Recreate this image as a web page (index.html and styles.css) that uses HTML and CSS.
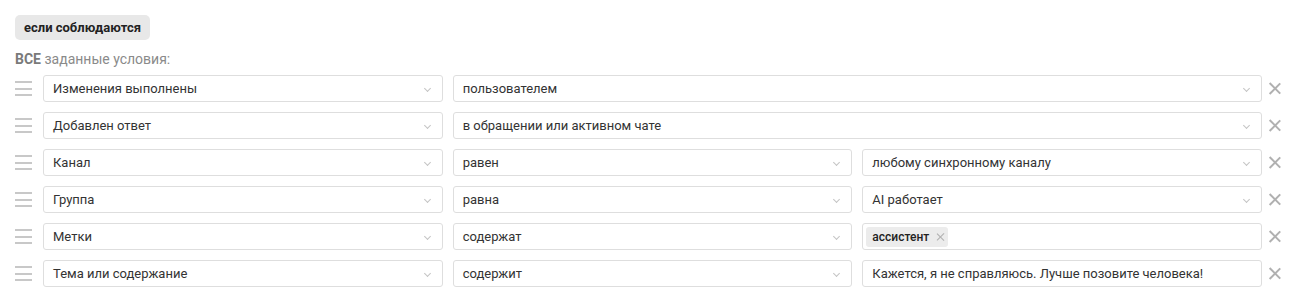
FILE: index.html
```html
<!DOCTYPE html>
<html lang="ru">
<head>
<meta charset="utf-8">
<link rel="stylesheet" href="styles.css">
</head>
<body>
<div class="panel">
  <div class="badge">если соблюдаются</div>
  <div class="caption"><b>ВСЕ</b> заданные условия:</div>
  <div class="rows">
    <div class="row">
      <span class="handle"><i></i><i></i><i></i></span>
      <div class="fields">
        <div class="field select">Изменения выполнены</div>
        <div class="field select wide">пользователем</div>
      </div>
      <span class="close"></span>
    </div>
    <div class="row">
      <span class="handle"><i></i><i></i><i></i></span>
      <div class="fields">
        <div class="field select">Добавлен ответ</div>
        <div class="field select wide">в обращении или активном чате</div>
      </div>
      <span class="close"></span>
    </div>
    <div class="row">
      <span class="handle"><i></i><i></i><i></i></span>
      <div class="fields">
        <div class="field select">Канал</div>
        <div class="field select">равен</div>
        <div class="field select">любому синхронному каналу</div>
      </div>
      <span class="close"></span>
    </div>
    <div class="row">
      <span class="handle"><i></i><i></i><i></i></span>
      <div class="fields">
        <div class="field select">Группа</div>
        <div class="field select">равна</div>
        <div class="field select">AI работает</div>
      </div>
      <span class="close"></span>
    </div>
    <div class="row">
      <span class="handle"><i></i><i></i><i></i></span>
      <div class="fields">
        <div class="field select">Метки</div>
        <div class="field select">содержат</div>
        <div class="field tags"><span class="tag">ассистент<span class="tag-x"></span></span></div>
      </div>
      <span class="close"></span>
    </div>
    <div class="row">
      <span class="handle"><i></i><i></i><i></i></span>
      <div class="fields">
        <div class="field select">Тема или содержание</div>
        <div class="field select">содержит</div>
        <div class="field input">Кажется, я не справляюсь. Лучше позовите человека!</div>
      </div>
      <span class="close"></span>
    </div>
  </div>
</div>
</body>
</html>
```
FILE: styles.css
```css
* { box-sizing: border-box; }
html, body { margin: 0; background: #fff; }
body {
  font-family: Roboto, "Liberation Sans", Arial, sans-serif;
  color: #333;
  font-size: 13px;
}
.panel { padding: 15px 14px 15px 15px; }
.badge {
  display: inline-flex;
  align-items: center;
  height: 25px;
  padding: 0 9px;
  background: #e8e8e8;
  border-radius: 5px;
  font-size: 13px;
  font-weight: 700;
  color: #222;
}
.caption {
  margin-top: 11px;
  font-size: 14px;
  color: #8a8a8a;
  line-height: 17px;
}
.caption b { font-weight: 700; color: #7a7a7a; }
.rows {
  margin-top: 7px;
  display: flex;
  flex-direction: column;
  gap: 10px;
}
.row {
  display: flex;
  align-items: center;
  height: 27px;
}
.handle {
  width: 28px;
  flex: none;
  display: flex;
  flex-direction: column;
  gap: 4.5px;
  padding-right: 11px;
}
.handle i {
  display: block;
  height: 2px;
  background: #c8c8c8;
}
.fields {
  flex: 1;
  display: grid;
  grid-template-columns: 1fr 1fr 1fr;
  gap: 10px;
  height: 27px;
}
.wide { grid-column: span 2; }
.field {
  position: relative;
  border: 1px solid #dedede;
  border-radius: 3px;
  height: 27px;
  display: flex;
  align-items: center;
  padding: 0 24px 0 9px;
  white-space: nowrap;
  overflow: hidden;
  color: #333;
}
.select::after {
  content: "";
  position: absolute;
  right: 12px;
  top: 10px;
  width: 4px;
  height: 4px;
  border-right: 1px solid #c4c4c4;
  border-bottom: 1px solid #c4c4c4;
  transform: rotate(45deg);
}
.tags { padding-left: 3px; }
.tag {
  display: inline-flex;
  align-items: center;
  height: 20px;
  padding: 0 4px 0 6px;
  background: #ececec;
  border-radius: 3px;
  font-size: 12px;
  font-weight: 500;
  color: #222;
}
.tag-x {
  position: relative;
  width: 8px;
  height: 8px;
  margin-left: 7px;
}
.tag-x::before, .tag-x::after,
.close::before, .close::after {
  content: "";
  position: absolute;
  left: 50%;
  top: 50%;
  width: 1.2px;
  background: #b0b0b0;
}
.tag-x::before, .tag-x::after { height: 10px; margin: -5px 0 0 -0.6px; }
.tag-x::before { transform: rotate(45deg); }
.tag-x::after { transform: rotate(-45deg); }
.close {
  position: relative;
  flex: none;
  width: 12px;
  height: 12px;
  margin-left: 7px;
}
.close::before, .close::after { height: 15px; margin: -7.5px 0 0 -0.75px; width: 1.5px; background: #b0b0b0; }
.close::before { transform: rotate(45deg); }
.close::after { transform: rotate(-45deg); }
```
